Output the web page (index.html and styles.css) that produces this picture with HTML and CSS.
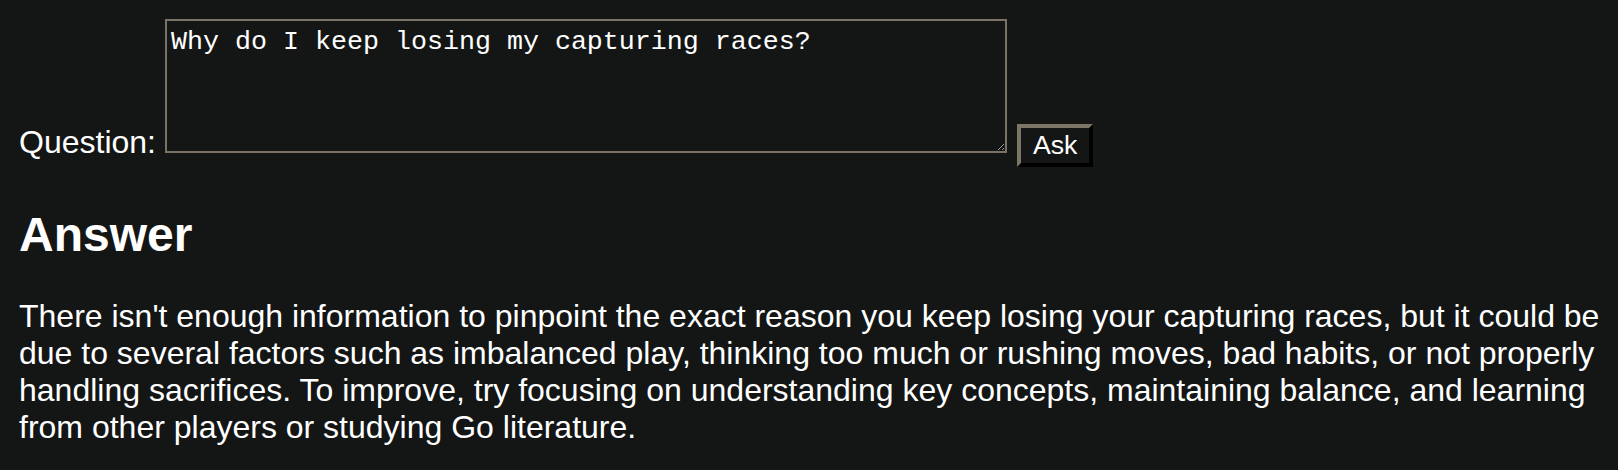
FILE: index.html
```html
<!DOCTYPE html>
<html lang="en">
<head>
<meta charset="utf-8">
<title>Ask</title>
<link rel="stylesheet" href="styles.css">
</head>
<body>
<form class="ask-form">
  <label class="q-label" for="q">Question:</label>
  <textarea id="q" class="q-input">Why do I keep losing my capturing races?</textarea>
  <button type="button" class="ask-btn">Ask</button>
</form>
<h2 class="answer-title">Answer</h2>
<p class="answer-text">There isn't enough information to pinpoint the exact reason you keep losing your capturing races, but it could be due to several factors such as imbalanced play, thinking too much or rushing moves, bad habits, or not properly handling sacrifices. To improve, try focusing on understanding key concepts, maintaining balance, and learning from other players or studying Go literature.</p>
</body>
</html>
```
FILE: styles.css
```css
html, body {
  background: #141615;
}
body {
  margin: 0;
  padding: 19px 16px 0 19px;
  color: #ffffff;
  font-family: "Liberation Sans", Arial, Helvetica, sans-serif;
  font-size: 32px;
}
.ask-form {
  display: flex;
  align-items: flex-end;
}
.q-label {
  line-height: 37px;
  margin-bottom: 6px;
}
.q-input {
  box-sizing: border-box;
  width: 842px;
  height: 134px;
  margin: 0 0 14px 9px;
  padding: 6px 4px 4px;
  border: 2px solid #7a7264;
  background: #141615;
  color: #ffffff;
  font-family: "Liberation Mono", "Courier New", monospace;
  font-size: 26.67px;
  line-height: normal;
}
.ask-btn {
  margin: 0 0 0 10px;
  padding: 2px 12px;
  border: 4px outset #7a7264;
  border-color: #7d7566 #3b3731 #3b3731 #7d7566;
  background: #141615;
  color: #ffffff;
  font-family: "Liberation Sans", Arial, Helvetica, sans-serif;
  font-size: 26.67px;
  line-height: normal;
}
.answer-title {
  margin: 40px 0 36px;
  font-size: 48px;
  font-weight: bold;
  line-height: 55px;
}
.answer-text {
  margin: 0;
  line-height: 37px;
}
```
